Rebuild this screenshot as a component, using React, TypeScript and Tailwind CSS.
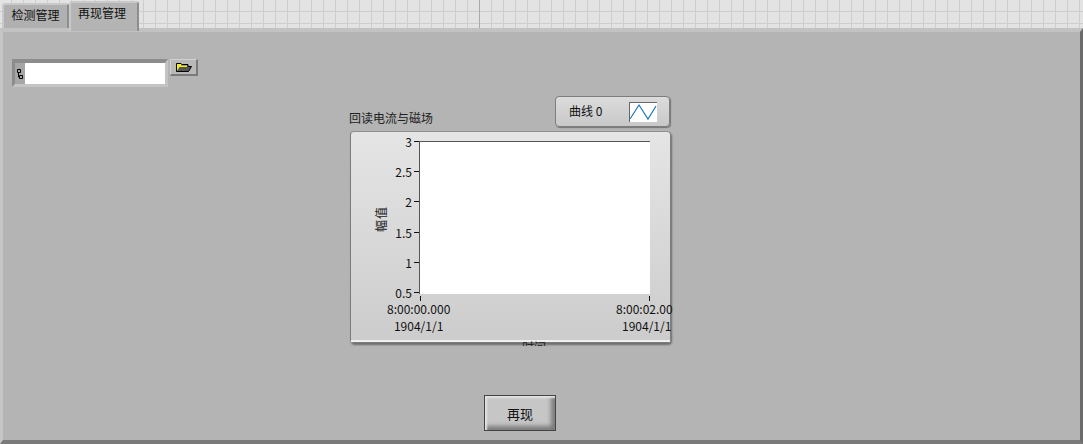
const FONT = '[font-family:"Noto_Sans_CJK_SC","Noto_Sans",sans-serif]'

const Y_TICKS = ['3', '2.5', '2', '1.5', '1', '0.5']

function FolderIcon() {
  return (
    <svg width="16" height="10" viewBox="0 0 16 10">
      <path d="M0.5 1.5H5L6 2.5H12V4.5H15.5L12.5 9.5H0.5Z" fill="#555" stroke="#000" />
      <path d="M1 2H5V3.5H11V5H3.5L1 9Z" fill="#f7ef1e" />
    </svg>
  )
}

function PathIcon() {
  return (
    <svg width="8" height="12" viewBox="0 0 8 12">
      <path d="M1.5 1.5H4.5V4.5H1.5ZM3.5 7.5H6.5V10.5H3.5ZM2.5 4.5V9H3.5" fill="none" stroke="#000" />
    </svg>
  )
}

function PlotSwatch() {
  return (
    <svg width="28" height="20" viewBox="0 0 28 20" className="bg-white shadow-[inset_1px_1px_0_#666]">
      <path d="M1 17L10 3L19 17L27 4" fill="none" stroke="#1f77b4" strokeWidth="1.2" />
    </svg>
  )
}

function Graph() {
  return (
    <div className="relative mt-[4px] h-[212px] w-[321px] rounded-[4px] border border-[#7d7d7d] border-t-[#8f8f8f] bg-gradient-to-b from-[#e5e5e5] to-[#cccccc] shadow-[1px_2px_2px_rgba(0,0,0,0.4)]">
      <div className="absolute inset-x-0 bottom-0 h-[2px] bg-[#f0f0f0]" />
      <div className="flex h-full pl-[68px] pt-[9px]">
        {/* y scale */}
        <div className="-mt-[6px] flex h-[164px] w-[0px] flex-col justify-between">
          {Y_TICKS.map(t => (
            <div key={t} className="flex h-[13px] items-center justify-end">
              <span className="mr-[2px] text-[12px] leading-[13px] whitespace-nowrap text-[#111]">{t}</span>
              <span className="h-[1px] w-[5px] shrink-0 bg-[#111]" />
            </div>
          ))}
        </div>
        {/* plot */}
        <div className="h-[153px] w-[231px] border-t border-l border-[#555] bg-white" />
      </div>

      <span className="absolute top-[79px] left-[17px] -rotate-90 text-[12px] leading-[16px] tracking-[1px] text-[#222]">幅值</span>

      {/* x scale */}
      <span className="absolute top-[164px] left-[69px] h-[5px] w-[1px] bg-[#111]" />
      <span className="absolute top-[164px] left-[298px] h-[5px] w-[1px] bg-[#111]" />
      <div className="absolute top-[168px] left-[36px] flex flex-col items-center text-[12px] leading-[17px] text-[#111]">
        <span>8:00:00.000</span>
        <span>1904/1/1</span>
      </div>
      <div className="absolute top-[168px] left-[265px] w-[57px] overflow-hidden text-[12px] leading-[17px] whitespace-nowrap text-[#111]">
        <div>8:00:02.000</div>
        <div className="pl-[6px]">1904/1/1</div>
      </div>
      <div className="absolute top-[208px] left-[171px] h-[6px] overflow-hidden text-[12px] leading-[14px] text-[#222]">时间</div>
    </div>
  )
}

export default function App() {
  return (
    <div className={`flex h-[444px] w-[1083px] flex-col overflow-hidden bg-[#e3e3e3] bg-[linear-gradient(#cdcdcd_1px,transparent_1px),linear-gradient(90deg,#cdcdcd_1px,transparent_1px)] bg-[size:12px_12px] bg-[position:-1px_-1px] ${FONT}`}>
      {/* tabs */}
      <div className="relative flex h-[28px] shrink-0 items-end pl-[2px] text-[12px] text-[#111]">
        <span className="absolute top-0 bottom-0 left-[479px] w-[1px] bg-[#a9a9a9]" />
        <div className="flex h-[25px] w-[67px] items-start justify-center rounded-t-[3px] border-t-2 border-r-2 border-l-2 border-t-[#c9c9c9] border-r-[#8e8e8e] border-l-[#c9c9c9] bg-[#b0b0b0] pt-[4px] leading-none">
          检测管理
        </div>
        <div className="z-10 -mb-[3px] flex h-[30px] w-[70px] items-start justify-center rounded-t-[3px] border-t-2 border-r-2 border-l-2 border-t-[#c9c9c9] border-r-[#8e8e8e] border-l-[#c9c9c9] bg-[#b4b4b4] pt-[4px] pr-[4px] leading-none">
          再现管理
        </div>
      </div>

      {/* page */}
      <div className="relative flex min-h-0 flex-1 flex-col border-t-[4px] border-r-[3px] border-b-[4px] border-l-[3px] border-t-[#c2c2c2] border-r-[#6b6b6b] border-b-[#7a7a7a] border-l-[#c6c6c6] bg-[#b4b4b4] text-[12px] text-[#111]">
        {/* path control */}
        <div className="ml-[9px] mt-[27px] flex h-[28px] items-start">
          <div className="flex h-[28px] w-[156px] border-t-[4px] border-r-[3px] border-b-[3px] border-l-[3px] border-t-[#8c8c8c] border-r-[#c4c4c4] border-b-[#c4c4c4] border-l-[#8c8c8c] bg-[#a6a6a6]">
            <div className="flex w-[10px] items-center justify-center">
              <PathIcon />
            </div>
            <div className="flex-1 bg-white" />
          </div>
          <div className="ml-[2px] flex h-[17px] w-[28px] items-center justify-center border-t border-r-2 border-b-2 border-l border-t-[#d0d0d0] border-r-[#7a7a7a] border-b-[#7a7a7a] border-l-[#d0d0d0] bg-[#b9b9b9]">
            <FolderIcon />
          </div>
        </div>

        {/* graph block */}
        <div className="ml-[347px] mt-[9px] flex w-[321px] flex-col">
          <div className="flex items-end justify-between">
            <span className="mb-[1px] -ml-[1px] leading-[16px] text-[#222]">回读电流与磁场</span>
            <div className="mr-[1px] flex h-[31px] w-[115px] items-center justify-between rounded-[4px] border border-[#7d7d7d] bg-gradient-to-b from-[#dcdcdc] to-[#c8c8c8] pr-[12px] pl-[13px] shadow-[1px_1px_1px_rgba(0,0,0,0.35)]">
              <span className="mb-[2px] leading-none text-[#111]">曲线 0</span>
              <PlotSwatch />
            </div>
          </div>
          <Graph />
        </div>

        {/* action button */}
        <div className="ml-[481px] mt-[52px] flex">
          <button
            type="button"
            className="flex h-[36px] w-[72px] items-center justify-center border border-[#444] bg-[#c6c6c6] text-[13px] leading-none text-[#111] shadow-[inset_2px_2px_2px_#e3e3e3,inset_-4px_-4px_4px_#7b7b7b]"
          >
            再现
          </button>
        </div>
      </div>
    </div>
  )
}
